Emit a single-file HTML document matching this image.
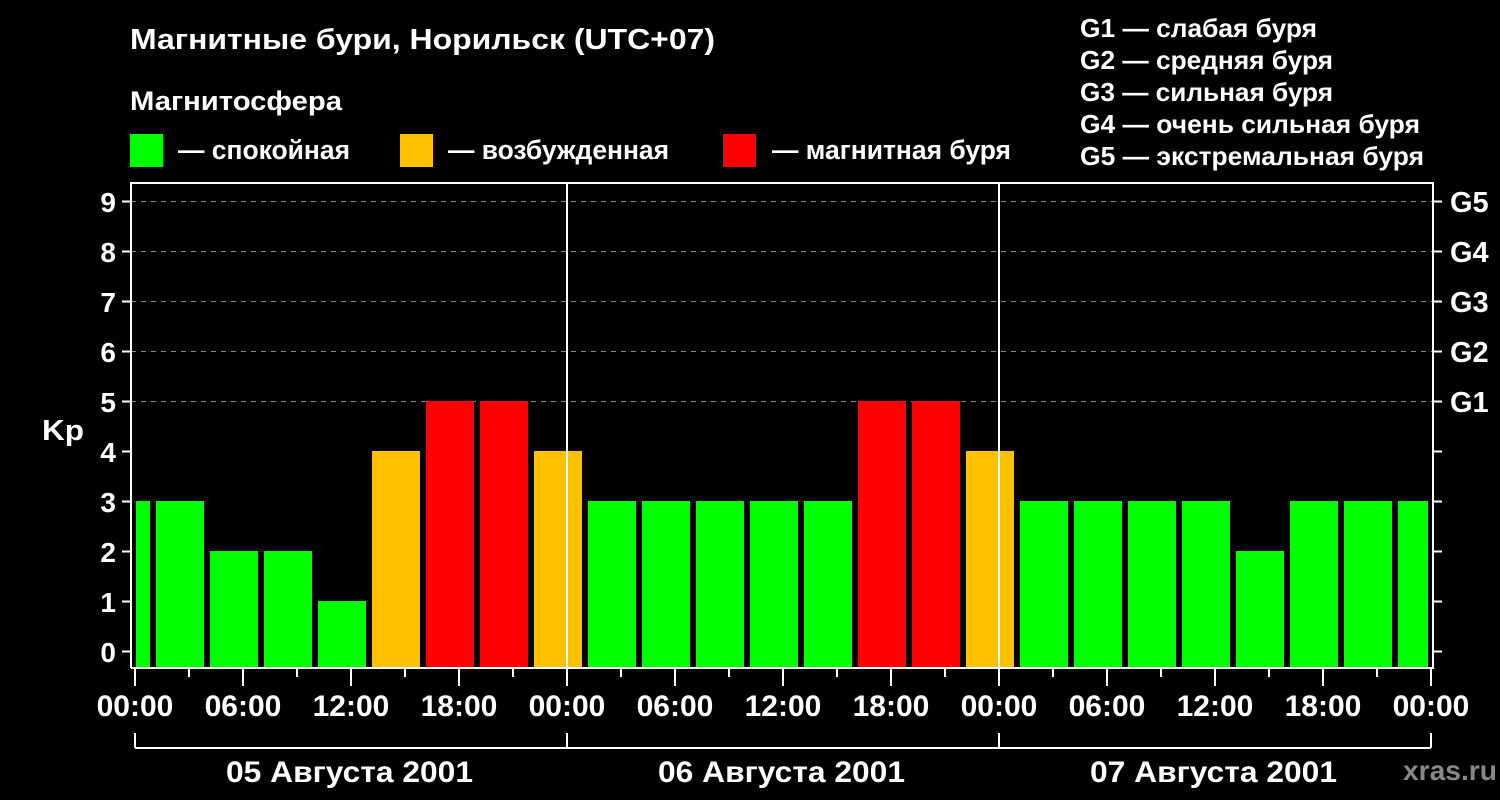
<!DOCTYPE html>
<html><head><meta charset="utf-8"><style>html,body{margin:0;padding:0;background:#000;}svg{display:block;font-family:"Liberation Sans",sans-serif;font-weight:bold;}</style></head><body>
<svg width="1500" height="800" xmlns="http://www.w3.org/2000/svg">
<rect width="1500" height="800" fill="#000"/>
<g fill="#fff" font-size="27" lengthAdjust="spacingAndGlyphs">
<text x="130" y="49" font-size="29" textLength="585" lengthAdjust="spacingAndGlyphs">Магнитные бури, Норильск (UTC+07)</text>
<text x="130" y="110" textLength="212" lengthAdjust="spacingAndGlyphs">Магнитосфера</text>
<text x="178" y="159" textLength="172" lengthAdjust="spacingAndGlyphs">— спокойная</text>
<text x="448" y="159" textLength="221" lengthAdjust="spacingAndGlyphs">— возбужденная</text>
<text x="772" y="159" textLength="239" lengthAdjust="spacingAndGlyphs">— магнитная буря</text>
<text x="1080" y="37" font-size="26" textLength="237" lengthAdjust="spacingAndGlyphs">G1 — слабая буря</text>
<text x="1080" y="69" font-size="26" textLength="253" lengthAdjust="spacingAndGlyphs">G2 — средняя буря</text>
<text x="1080" y="101" font-size="26" textLength="253" lengthAdjust="spacingAndGlyphs">G3 — сильная буря</text>
<text x="1080" y="133" font-size="26" textLength="340" lengthAdjust="spacingAndGlyphs">G4 — очень сильная буря</text>
<text x="1080" y="165" font-size="26" textLength="344" lengthAdjust="spacingAndGlyphs">G5 — экстремальная буря</text>
</g>
<rect x="130" y="134" width="33" height="33" fill="#00ff00"/>
<rect x="400" y="134" width="33" height="33" fill="#ffc000"/>
<rect x="723" y="134" width="33" height="33" fill="#ff0000"/>
<g stroke="#888" stroke-width="1" stroke-dasharray="5,5">
<line x1="131" y1="201.5" x2="1433" y2="201.5"/><line x1="131" y1="251.5" x2="1433" y2="251.5"/><line x1="131" y1="301.5" x2="1433" y2="301.5"/><line x1="131" y1="351.5" x2="1433" y2="351.5"/><line x1="131" y1="401.5" x2="1433" y2="401.5"/>
</g>
<g>
<rect x="136" y="501" width="14" height="167" fill="#00ff00"/>
<rect x="156" y="501" width="48" height="167" fill="#00ff00"/>
<rect x="210" y="551" width="48" height="117" fill="#00ff00"/>
<rect x="264" y="551" width="48" height="117" fill="#00ff00"/>
<rect x="318" y="601" width="48" height="67" fill="#00ff00"/>
<rect x="372" y="451" width="48" height="217" fill="#ffc000"/>
<rect x="426" y="401" width="48" height="267" fill="#ff0000"/>
<rect x="480" y="401" width="48" height="267" fill="#ff0000"/>
<rect x="534" y="451" width="48" height="217" fill="#ffc000"/>
<rect x="588" y="501" width="48" height="167" fill="#00ff00"/>
<rect x="642" y="501" width="48" height="167" fill="#00ff00"/>
<rect x="696" y="501" width="48" height="167" fill="#00ff00"/>
<rect x="750" y="501" width="48" height="167" fill="#00ff00"/>
<rect x="804" y="501" width="48" height="167" fill="#00ff00"/>
<rect x="858" y="401" width="48" height="267" fill="#ff0000"/>
<rect x="912" y="401" width="48" height="267" fill="#ff0000"/>
<rect x="966" y="451" width="48" height="217" fill="#ffc000"/>
<rect x="1020" y="501" width="48" height="167" fill="#00ff00"/>
<rect x="1074" y="501" width="48" height="167" fill="#00ff00"/>
<rect x="1128" y="501" width="48" height="167" fill="#00ff00"/>
<rect x="1182" y="501" width="48" height="167" fill="#00ff00"/>
<rect x="1236" y="551" width="48" height="117" fill="#00ff00"/>
<rect x="1290" y="501" width="48" height="167" fill="#00ff00"/>
<rect x="1344" y="501" width="48" height="167" fill="#00ff00"/>
<rect x="1398" y="501" width="30" height="167" fill="#00ff00"/>
</g>
<g stroke="#fff" stroke-width="2" fill="none">
<polyline points="131,668 131,183 1433,183 1433,668 131,668"/>
<line x1="567" y1="183" x2="567" y2="668"/><line x1="999" y1="183" x2="999" y2="668"/>
<path d="M122 201.5h9M122 251.5h9M122 301.5h9M122 351.5h9M122 401.5h9M122 451.5h9M122 501.5h9M122 551.5h9M122 601.5h9M122 651.5h9"/>
<path d="M1433 201.5h9M1433 251.5h9M1433 301.5h9M1433 351.5h9M1433 401.5h9M1433 451.5h9M1433 501.5h9M1433 551.5h9M1433 601.5h9M1433 651.5h9"/>
<path d="M135 668v18M243 668v18M351 668v18M459 668v18M567 668v18M675 668v18M783 668v18M891 668v18M999 668v18M1107 668v18M1215 668v18M1323 668v18M1431 668v18"/>
<path d="M189 668v9M297 668v9M405 668v9M513 668v9M621 668v9M729 668v9M837 668v9M945 668v9M1053 668v9M1161 668v9M1269 668v9M1377 668v9"/>
<path d="M135 733v15M567 733v15M999 733v15M1431 733v15M135 748H1431"/>
</g>
<g fill="#fff" font-size="28" text-anchor="end">
<text x="116" y="212">9</text><text x="116" y="262">8</text><text x="116" y="312">7</text><text x="116" y="362">6</text><text x="116" y="412">5</text><text x="116" y="462">4</text><text x="116" y="512">3</text><text x="116" y="562">2</text><text x="116" y="612">1</text><text x="116" y="662">0</text>
</g>
<text x="42" y="440" fill="#fff" font-size="29" textLength="42" lengthAdjust="spacingAndGlyphs">Kp</text>
<g fill="#fff" font-size="29">
<text x="1450" y="212">G5</text><text x="1450" y="262">G4</text><text x="1450" y="312">G3</text><text x="1450" y="362">G2</text><text x="1450" y="412">G1</text>
</g>
<g fill="#fff" font-size="30" text-anchor="middle">
<text x="135" y="716">00:00</text><text x="243" y="716">06:00</text><text x="351" y="716">12:00</text><text x="459" y="716">18:00</text><text x="567" y="716">00:00</text><text x="675" y="716">06:00</text><text x="783" y="716">12:00</text><text x="891" y="716">18:00</text><text x="999" y="716">00:00</text><text x="1107" y="716">06:00</text><text x="1215" y="716">12:00</text><text x="1323" y="716">18:00</text><text x="1431" y="716">00:00</text>
</g>
<g fill="#fff" font-size="30">
<text x="226" y="782" textLength="247" lengthAdjust="spacingAndGlyphs">05 Августа 2001</text><text x="658" y="782" textLength="247" lengthAdjust="spacingAndGlyphs">06 Августа 2001</text><text x="1090" y="782" textLength="247" lengthAdjust="spacingAndGlyphs">07 Августа 2001</text>
</g>
<text x="1403" y="780" fill="#888" font-size="28" textLength="94" lengthAdjust="spacingAndGlyphs">xras.ru</text>
</svg>
</body></html>
